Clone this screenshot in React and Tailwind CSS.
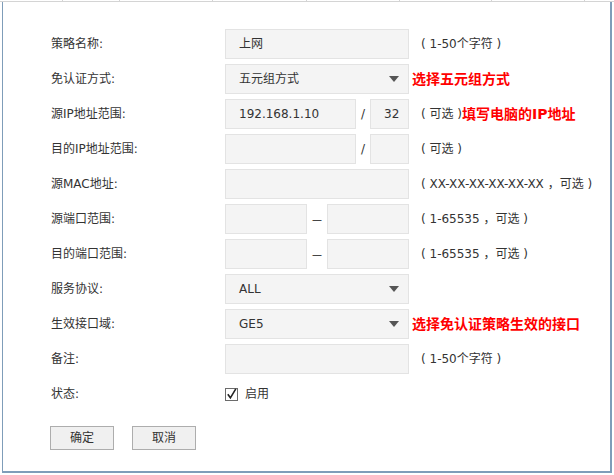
import React from "react";

const Arrow = () => (
  <svg width="10" height="6" viewBox="0 0 10 6" className="shrink-0">
    <polygon points="0,0 10,0 5,6" fill="#555555" />
  </svg>
);

const Box = ({ w, children, className = "" }) => (
  <div
    className={`h-[30px] shrink-0 border border-[#e3e3e3] bg-[#f4f4f4] flex items-center pl-[13px] text-[12px] text-[#333] ${w} ${className}`}
  >
    {children}
  </div>
);

const Row = ({ label, children }) => (
  <div className="flex items-center h-[30px]">
    <div className="w-[174px] shrink-0 text-[12px] text-[#333] leading-none">{label}</div>
    {children}
  </div>
);

const Hint = ({ children }) => (
  <span className="ml-[12px] text-[12px] text-[#333] whitespace-nowrap">{children}</span>
);

const Red = ({ children, className = "ml-[3px]" }) => (
  <span className={`${className} text-[14px] font-bold text-[#ff0000] whitespace-nowrap`}>{children}</span>
);

export default function App() {
  return (
    <div className="w-[614px] h-[475px] bg-white font-['DejaVu_Sans','Noto_Sans_CJK_SC',sans-serif] overflow-hidden">
      <div className="flex h-[2px] border-b border-[#d4d4d4]">
        <div className="w-[63px] h-[1px] border-r border-[#d4d4d4]" />
        <div className="w-[57px] h-[1px] border-r border-[#d4d4d4]" />
        <div className="w-[93px] h-[1px] border-r border-[#d4d4d4]" />
        <div className="w-[94px] h-[1px] border-r border-[#d4d4d4]" />
        <div className="w-[93px] h-[1px] border-r border-[#d4d4d4]" />
        <div className="w-[92px] h-[1px] border-r border-[#d4d4d4]" />
        <div className="w-[93px] h-[1px] border-r border-[#d4d4d4]" />
      </div>
      <div className="ml-[2px] w-[610px] h-[471px] border-l border-r-2 border-b-2 border-[#7f9db9] pt-[27px]">
        <div className="flex flex-col gap-[5px] pl-[48px]">
          <Row label="策略名称:">
            <Box w="w-[184px]">上网</Box>
            <Hint>( 1-50个字符 )</Hint>
          </Row>
          <Row label="免认证方式:">
            <Box w="w-[184px]" className="justify-between pr-[9px]">
              <span>五元组方式</span>
              <Arrow />
            </Box>
            <Red>选择五元组方式</Red>
          </Row>
          <Row label="源IP地址范围:">
            <Box w="w-[131px]">192.168.1.10</Box>
            <span className="w-[14px] text-center text-[12px] text-[#333]">/</span>
            <Box w="w-[39px]">32</Box>
            <Hint>( 可选 )</Hint>
            <Red className="ml-0">填写电脑的IP地址</Red>
          </Row>
          <Row label="目的IP地址范围:">
            <Box w="w-[131px]" />
            <span className="w-[14px] text-center text-[12px] text-[#333]">/</span>
            <Box w="w-[39px]" />
            <Hint>( 可选 )</Hint>
          </Row>
          <Row label="源MAC地址:">
            <Box w="w-[184px]" />
            <Hint>( XX-XX-XX-XX-XX-XX ，可选 )</Hint>
          </Row>
          <Row label="源端口范围:">
            <Box w="w-[82px]" />
            <span className="w-[20px] text-center text-[10px] text-[#111]">—</span>
            <Box w="w-[82px]" />
            <Hint>( 1-65535 ，可选 )</Hint>
          </Row>
          <Row label="目的端口范围:">
            <Box w="w-[82px]" />
            <span className="w-[20px] text-center text-[10px] text-[#111]">—</span>
            <Box w="w-[82px]" />
            <Hint>( 1-65535 ，可选 )</Hint>
          </Row>
          <Row label="服务协议:">
            <Box w="w-[184px]" className="justify-between pr-[9px]">
              <span>ALL</span>
              <Arrow />
            </Box>
          </Row>
          <Row label="生效接口域:">
            <Box w="w-[184px]" className="justify-between pr-[9px]">
              <span>GE5</span>
              <Arrow />
            </Box>
            <Red>选择免认证策略生效的接口</Red>
          </Row>
          <Row label="备注:">
            <Box w="w-[184px]" />
            <Hint>( 1-50个字符 )</Hint>
          </Row>
          <Row label="状态:">
            <div className="flex items-center gap-[7px]">
              <svg width="13" height="13" viewBox="0 0 13 13" className="shrink-0">
                <rect x="0.5" y="0.5" width="12" height="12" fill="#ffffff" stroke="#6b6b6b" />
                <path d="M2.8 6.2 L5.4 9.8 L10.8 0.8" fill="none" stroke="#222222" strokeWidth="1.6" />
              </svg>
              <span className="text-[12px] text-[#333]">启用</span>
            </div>
          </Row>
        </div>
        <div className="flex gap-[18px] pl-[47px] mt-[17px]">
          <button className="w-[64px] h-[24px] border border-[#adadad] bg-[#f0f0f0] text-[12px] text-[#333] flex items-center justify-center">
            确定
          </button>
          <button className="w-[64px] h-[24px] border border-[#adadad] bg-[#f0f0f0] text-[12px] text-[#333] flex items-center justify-center">
            取消
          </button>
        </div>
      </div>
    </div>
  );
}
